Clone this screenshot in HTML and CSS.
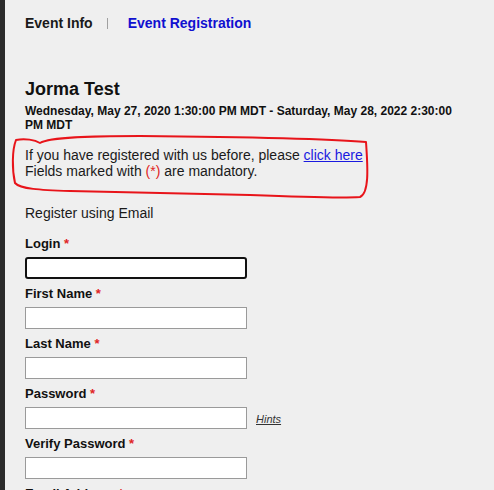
FILE: index.html
```html
<!DOCTYPE html>
<html>
<head>
<meta charset="utf-8">
<link rel="stylesheet" href="styles.css">
</head>
<body>
<div class="frame">
  <div class="edge"></div>
  <main class="page">
    <nav class="tabs">
      <span class="tab">Event Info</span>
      <span class="sep"></span>
      <a class="tab active" href="#">Event Registration</a>
    </nav>
    <h1 class="title">Jorma Test</h1>
    <p class="dates">Wednesday, May 27, 2020 1:30:00 PM MDT - Saturday, May 28, 2022 2:30:00 PM MDT</p>
    <div class="notice">
      <div>If you have registered with us before, please <a href="#" class="link">click here</a></div>
      <div>Fields marked with <span class="req">(*)</span> are mandatory.</div>
    </div>
    <p class="register">Register using Email</p>
    <form class="form">
      <div class="field">
        <label class="label">Login <span class="req">*</span></label>
        <div class="row"><input class="input focused" type="text"></div>
      </div>
      <div class="field">
        <label class="label">First Name <span class="req">*</span></label>
        <div class="row"><input class="input" type="text"></div>
      </div>
      <div class="field">
        <label class="label">Last Name <span class="req">*</span></label>
        <div class="row"><input class="input" type="text"></div>
      </div>
      <div class="field">
        <label class="label">Password <span class="req">*</span></label>
        <div class="row"><input class="input" type="password"><a href="#" class="hints">Hints</a></div>
      </div>
      <div class="field">
        <label class="label">Verify Password <span class="req">*</span></label>
        <div class="row"><input class="input" type="password"></div>
      </div>
      <div class="field">
        <label class="label">Email Address <span class="req">*</span></label>
        <div class="row"><input class="input" type="text"></div>
      </div>
    </form>
  </main>
  <svg class="annot" width="494" height="490" viewBox="0 0 494 490">
    <path d="M 16 140 C 12 150, 12 170, 15 183 C 20 189, 40 190, 70 191 L 250 195 C 300 197, 345 198, 360 197 C 369 193, 368 170, 366 142 C 330 139, 250 137, 140 136 C 90 136, 50 137, 40 143 C 35 140, 25 138, 16 140 Z" fill="none" stroke="#e8141a" stroke-width="2" stroke-linejoin="round"/>
  </svg>
</div>
</body>
</html>
```
FILE: styles.css
```css
* { box-sizing: border-box; }
html, body {
  margin: 0;
  padding: 0;
  background: #efefef;
}
body {
  font-family: "Liberation Sans", Arial, sans-serif;
  color: #111;
  overflow: hidden;
}
.frame {
  position: relative;
  display: flex;
  width: 494px;
  height: 490px;
  overflow: hidden;
}
.edge {
  width: 5px;
  flex: none;
  background: #2b2b2b;
}
.page {
  flex: 1;
  padding: 14px 24px 0 20px;
}
.tabs {
  display: flex;
  align-items: center;
  height: 18px;
  font-size: 14px;
  font-weight: bold;
  line-height: 18px;
}
.tab {
  color: #1a1a1a;
  text-decoration: none;
}
.tab.active {
  color: #1010d0;
}
.sep {
  width: 1px;
  height: 11px;
  background: #a0a0a0;
  margin: 0 20px 0 14px;
}
.title {
  margin: 46px 0 4px;
  font-size: 18px;
  line-height: 22px;
  font-weight: bold;
  color: #111;
}
.dates {
  margin: 0;
  font-size: 12px;
  line-height: 14px;
  font-weight: bold;
  color: #111;
}
.notice {
  margin-top: 15px;
  font-size: 14px;
  line-height: 16px;
  color: #1a1a1a;
}
.link {
  color: #1a1ae0;
  text-decoration: underline;
}
.req {
  color: #e02424;
}
.register {
  margin: 26px 0 0;
  font-size: 14px;
  line-height: 16px;
  color: #1a1a1a;
}
.form {
  margin-top: 15px;
}
.field {
  display: flex;
  flex-direction: column;
  height: 50px;
}
.label {
  font-size: 13px;
  line-height: 16px;
  font-weight: bold;
  color: #111;
}
.row {
  display: flex;
  align-items: center;
  margin-top: 5px;
}
.input {
  width: 222px;
  height: 22px;
  margin: 0;
  border: 1px solid #9a9a9a;
  background: #fff;
  padding: 0 4px;
  font: 13px "Liberation Sans", Arial, sans-serif;
  outline: none;
}
.input.focused {
  border: 2px solid #111;
  border-radius: 3px;
}
.hints {
  margin-left: 9px;
  font-size: 11px;
  font-style: italic;
  color: #333;
  text-decoration: underline;
  padding-top: 1px;
}
.annot {
  position: absolute;
  left: 0;
  top: 0;
  pointer-events: none;
}
```
